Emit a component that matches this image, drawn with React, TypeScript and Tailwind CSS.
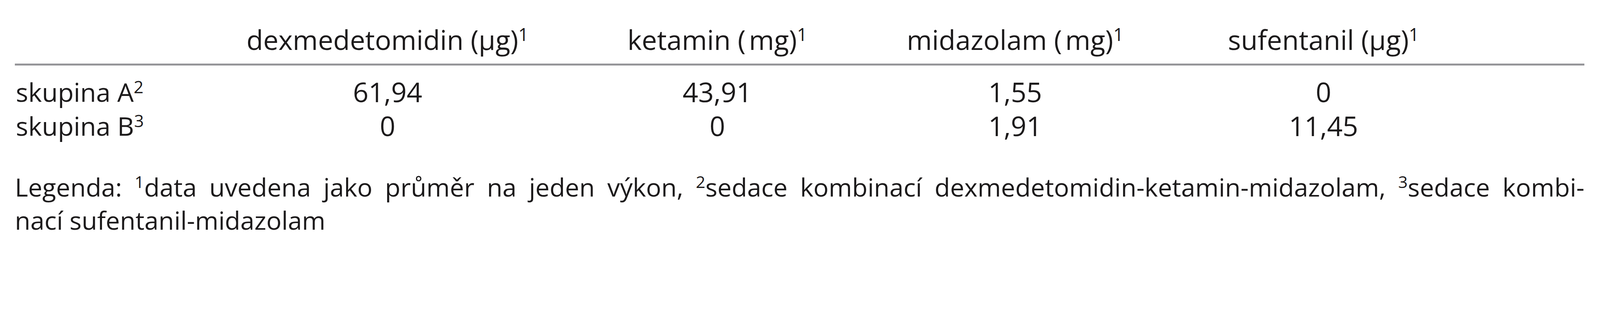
import React from "react";

const cols =
  "grid grid-cols-[11.3vw_23.985vw_17.237vw_19.988vw_18.563vw_1fr]";

function Sup({ children }: { children: React.ReactNode }) {
  return <sup className="text-[0.66em] top-[-0.5em]">{children}</sup>;
}

export default function App() {
  return (
    <div className="w-full min-h-[15.83vw] bg-white text-[#1c1a1b] font-['Open_Sans',_'Noto_Sans',_sans-serif] overflow-hidden">
      <div className="ml-[0.93vw] w-[98.1vw] pt-[1.464vw]">
        {/* header */}
        <div className={`${cols} text-[1.702vw] leading-[1.979vw]`}>
          <div />
          <div className="text-center whitespace-nowrap">
            dexmedetomidin (μg)<Sup>1</Sup>
          </div>
          <div className="text-center whitespace-nowrap">
            ketamin (<span className="ml-[0.198vw]">mg</span>)<Sup>1</Sup>
          </div>
          <div className="text-center whitespace-nowrap">
            midazolam (<span className="ml-[0.198vw]">mg</span>)<Sup>1</Sup>
          </div>
          <div className="text-center whitespace-nowrap">
            sufentanil (μg)<Sup>1</Sup>
          </div>
          <div />
        </div>

        {/* rule */}
        <div className="mt-[0.534vw] h-[0.115vw] bg-[#959599]" />

        {/* rows */}
        <div className="mt-[0.594vw]">
          <div className={`${cols} leading-[2.1175vw] text-[1.702vw]`}>
            <div className="text-[1.623vw] pl-[0.06vw] whitespace-nowrap">
              skupina A<Sup>2</Sup>
            </div>
            <div className="text-center">61,94</div>
            <div className="text-center">43,91</div>
            <div className="text-center">1,55</div>
            <div className="text-center">0</div>
            <div />
          </div>
          <div className={`${cols} leading-[2.1175vw] text-[1.702vw]`}>
            <div className="text-[1.623vw] pl-[0.06vw] whitespace-nowrap">
              skupina B<Sup>3</Sup>
            </div>
            <div className="text-center">0</div>
            <div className="text-center">0</div>
            <div className="text-center">1,91</div>
            <div className="text-center">11,45</div>
            <div />
          </div>
        </div>

        {/* legend */}
        <div className="mt-[1.7415vw] text-[1.583vw] leading-[2.078vw]">
          <div className="text-justify [text-align-last:justify]">
            Legenda: <Sup>1</Sup>data uvedena jako průměr na jeden výkon,{" "}
            <Sup>2</Sup>sedace kombinací dexmedetomidin-ketamin-midazolam,{" "}
            <Sup>3</Sup>sedace kombi-
          </div>
          <div>nací sufentanil-midazolam</div>
        </div>
      </div>
    </div>
  );
}
